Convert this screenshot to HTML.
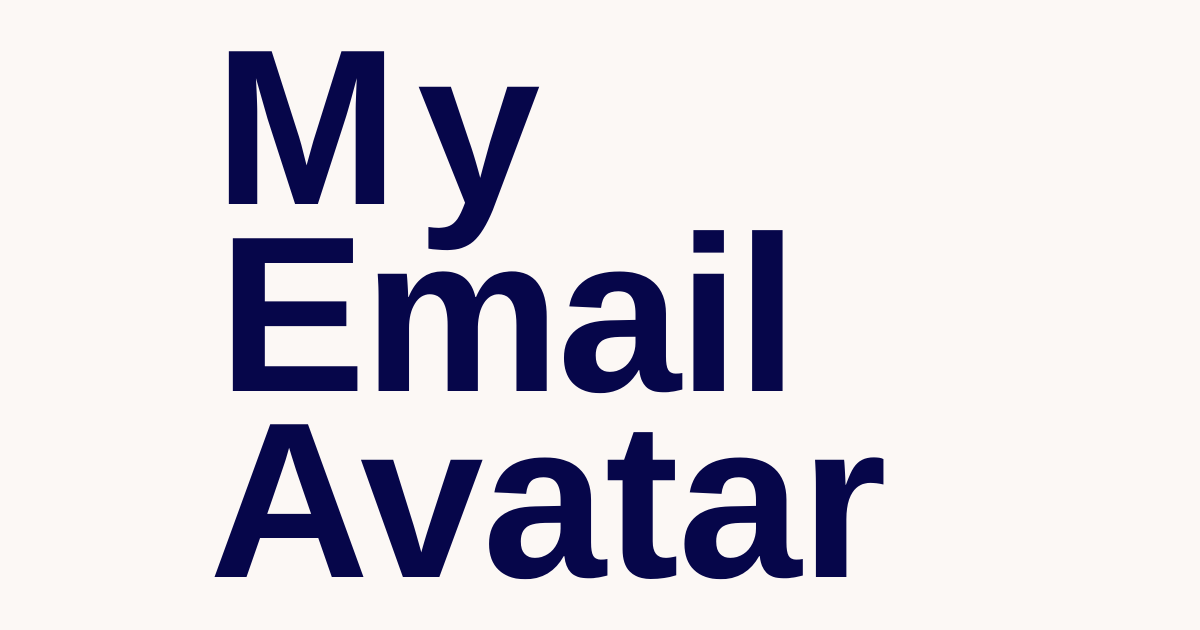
<!DOCTYPE html>
<html><head><meta charset="utf-8"><style>
html,body{margin:0;padding:0;}
body{width:1200px;height:630px;background:#fcf8f5;position:relative;overflow:hidden;}
.t{position:absolute;font-family:"Liberation Sans",sans-serif;font-weight:700;font-size:222px;line-height:222px;color:#06064a;white-space:nowrap;}
</style></head><body>
<div class="t" style="top:17px;left:214px;letter-spacing:18px">My</div>
<div class="t" style="top:204px;left:218px;letter-spacing:-3px">Email</div>
<div class="t" style="top:390px;left:209px;letter-spacing:-1px">Avatar</div>
</body></html>
